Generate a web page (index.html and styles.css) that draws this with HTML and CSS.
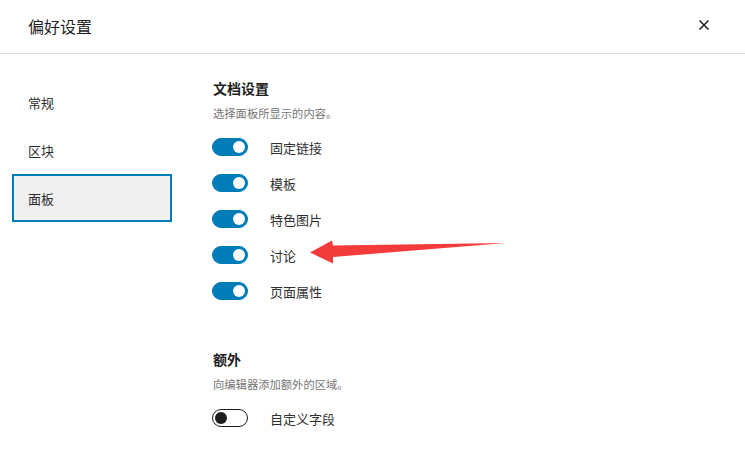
FILE: index.html
```html
<!DOCTYPE html>
<html lang="zh">
<head>
<meta charset="utf-8">
<link rel="stylesheet" href="styles.css">
</head>
<body>
<div class="modal">
  <header class="head">
    <h1 class="title">偏好设置</h1>
    <button class="close" aria-label="关闭">
      <svg width="12" height="12" viewBox="0 0 12 12"><path d="M1.5 1.5 L10.5 10.5 M10.5 1.5 L1.5 10.5" stroke="#1e1e1e" stroke-width="1.5" fill="none"/></svg>
    </button>
  </header>
  <div class="main">
    <nav class="tabs">
      <div class="tab">常规</div>
      <div class="tab">区块</div>
      <div class="tab active">面板</div>
    </nav>
    <div class="content">
      <section class="section">
        <h2 class="sec-title">文档设置</h2>
        <p class="sec-desc">选择面板所显示的内容。</p>
        <div class="rows">
          <div class="row"><span class="toggle on"></span><span class="label">固定链接</span></div>
          <div class="row"><span class="toggle on"></span><span class="label">模板</span></div>
          <div class="row"><span class="toggle on"></span><span class="label">特色图片</span></div>
          <div class="row"><span class="toggle on"></span><span class="label">讨论</span></div>
          <div class="row"><span class="toggle on"></span><span class="label">页面属性</span></div>
        </div>
      </section>
      <section class="section extra">
        <h2 class="sec-title">额外</h2>
        <p class="sec-desc">向编辑器添加额外的区域。</p>
        <div class="rows">
          <div class="row"><span class="toggle"></span><span class="label">自定义字段</span></div>
        </div>
      </section>
    </div>
  </div>
  <svg class="arrow" width="745" height="451" viewBox="0 0 745 451">
    <polygon points="310,252.5 332,240.5 333,245.5 506,243 333,257 333,263.5" fill="#f43b3b"/>
  </svg>
</div>
</body>
</html>
```

FILE: styles.css
```css
* { box-sizing: border-box; }
html, body { margin: 0; padding: 0; background: #fff; }
body {
  font-family: "Noto Sans CJK SC", "Noto Sans", sans-serif;
  color: #1e1e1e;
  width: 745px;
  height: 451px;
  overflow: hidden;
}
.modal { position: relative; width: 745px; height: 451px; }
.head {
  height: 54px;
  border-bottom: 1px solid #dcdcdc;
  display: flex;
  align-items: center;
  justify-content: space-between;
  padding: 0 28px 0 28px;
}
.title {
  margin: 0;
  font-size: 16px;
  font-weight: 400;
  line-height: 20px;
  margin-top: -2px;
}
.close {
  border: 0;
  background: none;
  padding: 0;
  width: 12px;
  height: 12px;
  display: flex;
  margin-right: 7px;
  margin-top: -4px;
}
.main {
  display: flex;
  padding-top: 24px;
}
.tabs {
  width: 172px;
  padding-left: 12px;
  display: flex;
  flex-direction: column;
}
.tab {
  height: 48px;
  display: flex;
  align-items: center;
  font-size: 13px;
  border: 2px solid transparent;
  padding-left: 14px;
  color: #2a2a2a;
}
.tab.active {
  background: #f0f0f0;
  border-color: #007cba;
}
.content {
  padding-left: 41px;
}
.sec-title {
  margin: 0;
  font-size: 14px;
  font-weight: 600;
  line-height: 20px;
}
.sec-desc {
  margin: 6px 0 0;
  font-size: 11.3px;
  line-height: 18px;
  color: #757575;
}
.rows {
  display: flex;
  flex-direction: column;
  gap: 18px;
  margin-top: 16px;
}
.row {
  display: flex;
  align-items: center;
  height: 18px;
}
.label {
  font-size: 13px;
  margin-left: 22px;
  color: #2f2f2f;
}
.toggle {
  position: relative;
  width: 36px;
  height: 18px;
  border-radius: 9px;
  border: 1px solid #1e1e1e;
  background: #fff;
  flex: none;
  margin-left: -1px;
}
.toggle::after {
  content: "";
  position: absolute;
  top: 2px;
  left: 2px;
  width: 12px;
  height: 12px;
  border-radius: 50%;
  background: #1e1e1e;
}
.toggle.on {
  background: #007cba;
  border-color: #007cba;
}
.toggle.on::after {
  left: auto;
  right: 2px;
  background: #fff;
}
.section.extra { margin-top: 49px; }
.arrow { position: absolute; left: 0; top: 0; pointer-events: none; }
```
